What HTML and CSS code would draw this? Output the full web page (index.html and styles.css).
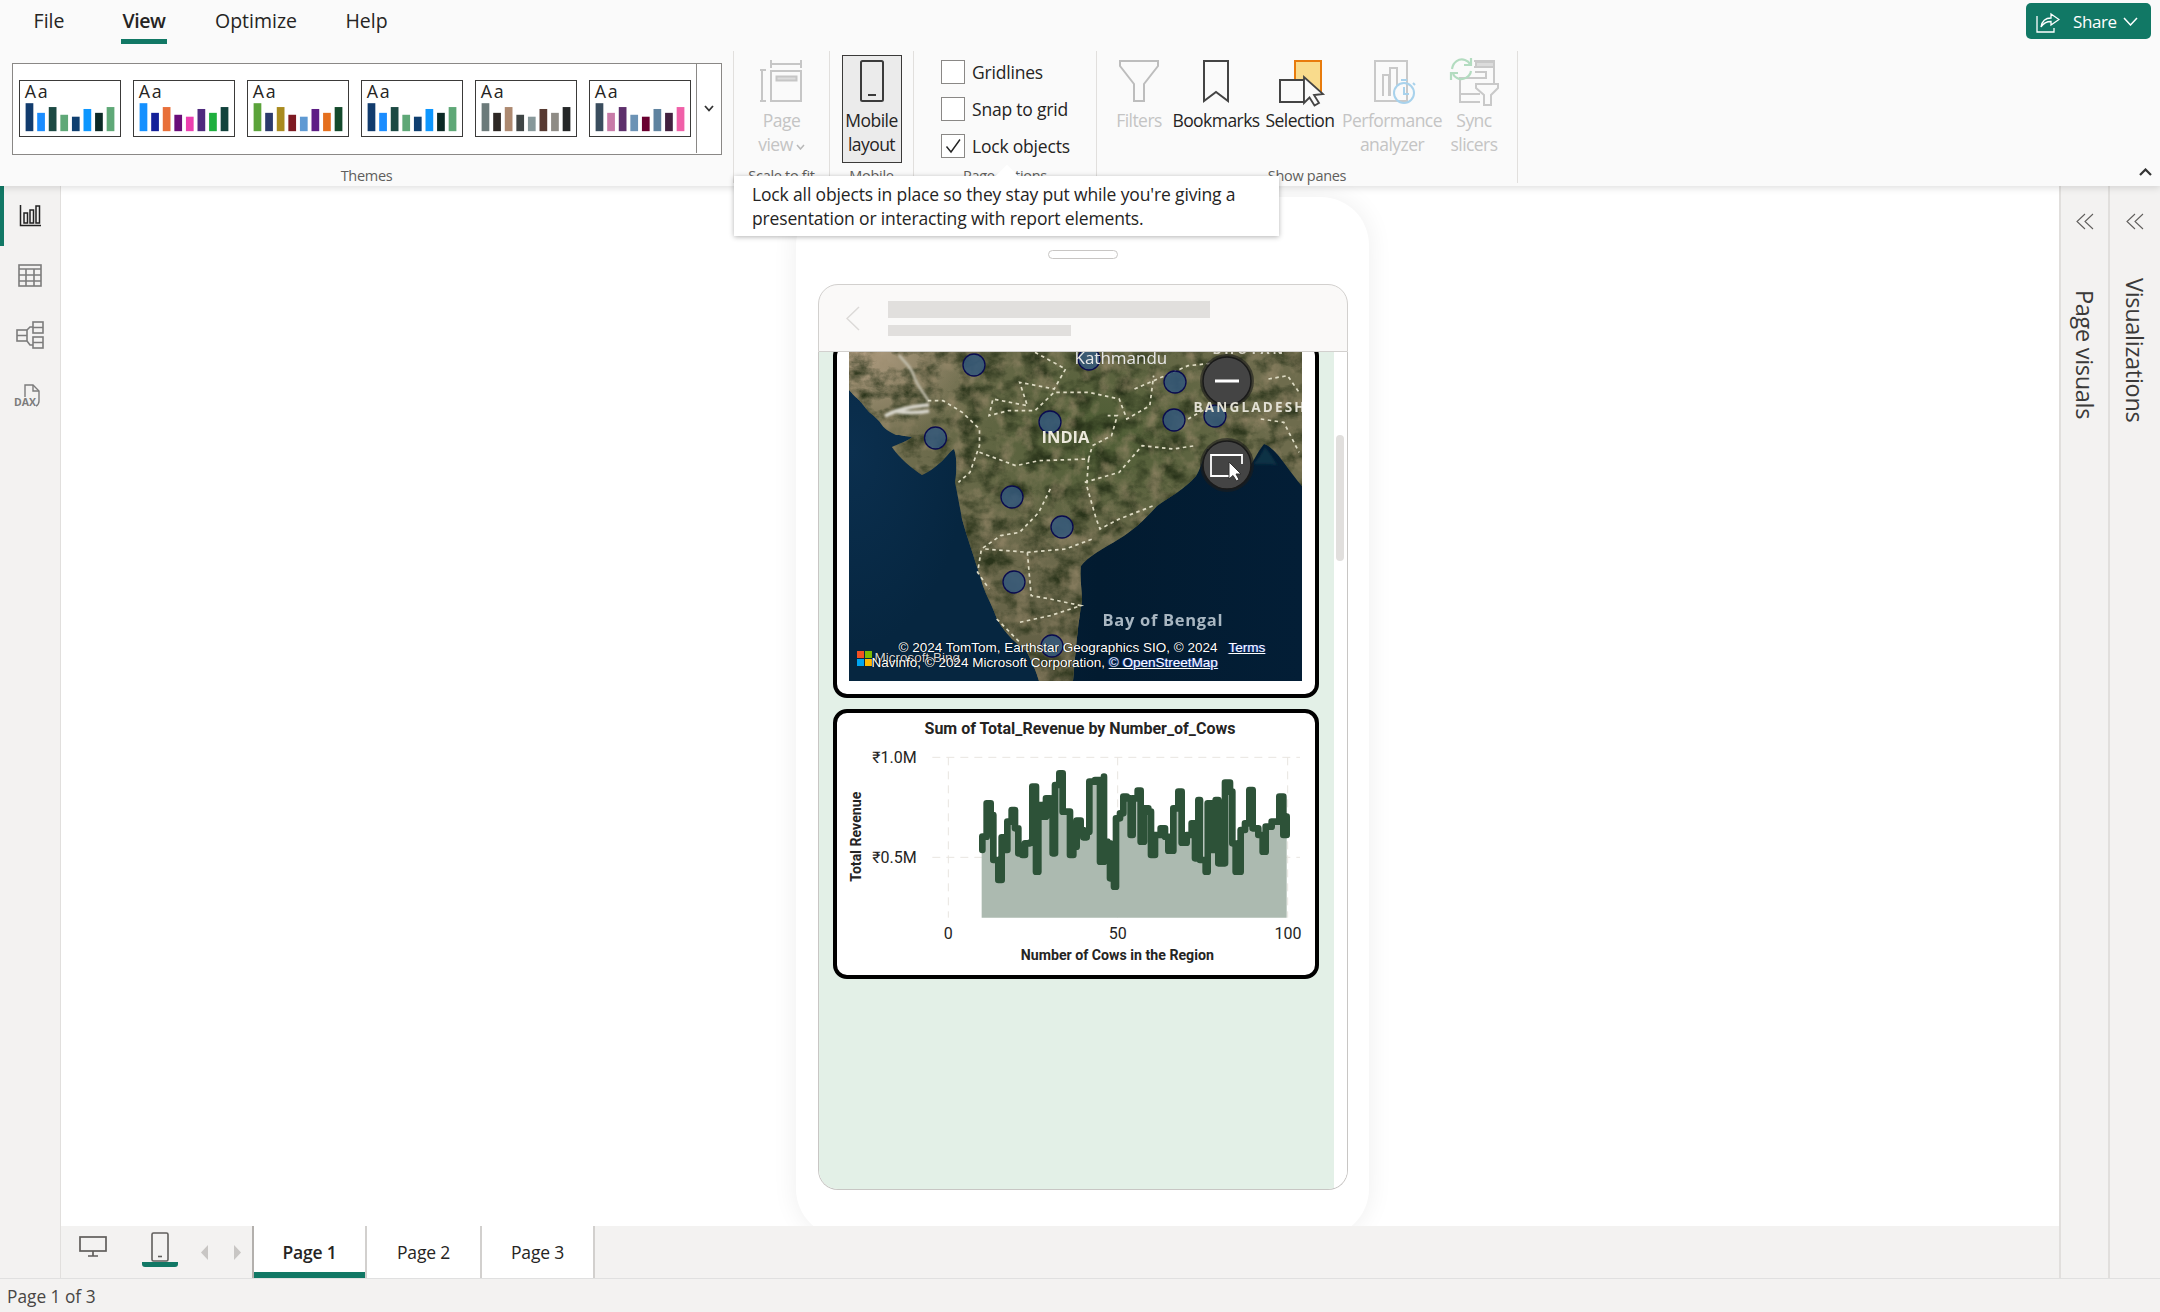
FILE: index.html
```html
<!DOCTYPE html>
<html lang="en">
<head>
<meta charset="utf-8">
<title>Power BI Desktop - Mobile layout</title>
<link rel="stylesheet" href="styles.css">
</head>
<body>
<header class="ribbon">
  <nav class="tabs">
    <span class="tab t-file">File</span>
    <span class="tab t-view active">View</span>
    <span class="tab t-opt">Optimize</span>
    <span class="tab t-help">Help</span>
    <button class="share">
      <svg width="24" height="24" viewBox="0 0 24 24" fill="none" stroke="#fff" stroke-width="1.3"><path d="M1 7V23H18V19"/><path d="M5 18C6 12 10 9 15 9V5L23 10.5L15 16V12.500C11 12.500 7.500 14 5 18Z"/></svg>
      <span>Share</span>
      <svg width="15" height="9" viewBox="0 0 15 9" fill="none" stroke="#fff" stroke-width="1.500"><path d="M1 1L7.500 8L14 1"/></svg>
    </button>
  </nav>
  <div class="groups">
    <section class="group g-themes">
      <div class="gallery">
        <svg width="0" height="0" class="defs"><defs>
          <rect id="b1" x="5" y="23" width="8" height="29"/><rect id="b2" x="17" y="33" width="8" height="19"/><rect id="b3" x="29" y="27" width="8" height="25"/><rect id="b4" x="41" y="35" width="8" height="17"/><rect id="b5" x="53" y="37" width="8" height="15"/><rect id="b6" x="65" y="29" width="8" height="23"/><rect id="b7" x="77" y="33" width="8" height="19"/><rect id="b8" x="89" y="27" width="8" height="25"/>
        </defs></svg>
        <svg class="thumb" viewBox="0 0 102 57"><text x="4" y="18" class="aa">Aa</text><use href="#b1" fill="#123c6e"/><use href="#b2" fill="#1a8cff"/><use href="#b3" fill="#1c4a44"/><use href="#b4" fill="#5fa877"/><use href="#b5" fill="#0f3f70"/><use href="#b6" fill="#0d97ff"/><use href="#b7" fill="#0c2a26"/><use href="#b8" fill="#5fa877"/></svg>
        <svg class="thumb" viewBox="0 0 102 57"><text x="4" y="18" class="aa">Aa</text><use href="#b1" fill="#1490ff"/><use href="#b2" fill="#14219a"/><use href="#b3" fill="#e8703a"/><use href="#b4" fill="#6a0d7a"/><use href="#b5" fill="#ec3fb0"/><use href="#b6" fill="#4f2a7e"/><use href="#b7" fill="#1faf3e"/><use href="#b8" fill="#11433c"/></svg>
        <svg class="thumb" viewBox="0 0 102 57"><text x="4" y="18" class="aa">Aa</text><use href="#b1" fill="#5ba33a"/><use href="#b2" fill="#2b3a6c"/><use href="#b3" fill="#a98b1f"/><use href="#b4" fill="#7e1a22"/><use href="#b5" fill="#5f9ad3"/><use href="#b6" fill="#5d1e85"/><use href="#b7" fill="#e5701e"/><use href="#b8" fill="#144a2c"/></svg>
        <svg class="thumb" viewBox="0 0 102 57"><text x="4" y="18" class="aa">Aa</text><use href="#b1" fill="#123c6e"/><use href="#b2" fill="#1a8cff"/><use href="#b3" fill="#1c4a44"/><use href="#b4" fill="#5fa877"/><use href="#b5" fill="#0f3f70"/><use href="#b6" fill="#0d97ff"/><use href="#b7" fill="#0c2a26"/><use href="#b8" fill="#5fa877"/></svg>
        <svg class="thumb" viewBox="0 0 102 57"><text x="4" y="18" class="aa">Aa</text><use href="#b1" fill="#6c7a7a"/><use href="#b2" fill="#2e2825"/><use href="#b3" fill="#ad8970"/><use href="#b4" fill="#3f4545"/><use href="#b5" fill="#87989a"/><use href="#b6" fill="#573a32"/><use href="#b7" fill="#8f8c86"/><use href="#b8" fill="#252728"/></svg>
        <svg class="thumb" viewBox="0 0 102 57"><text x="4" y="18" class="aa">Aa</text><use href="#b1" fill="#3a4d5e"/><use href="#b2" fill="#c87ba8"/><use href="#b3" fill="#5e2f6c"/><use href="#b4" fill="#6c93b5"/><use href="#b5" fill="#6a0030"/><use href="#b6" fill="#5f83a0"/><use href="#b7" fill="#43213f"/><use href="#b8" fill="#f060a8"/></svg>
        <span class="more"><svg width="10" height="7" viewBox="0 0 10 7" fill="none" stroke="#333" stroke-width="1.800"><path d="M1 1L5 5.500L9 1"/></svg></span>
      </div>
      <div class="glabel">Themes</div>
    </section>
    <section class="group g-scale">
      <div class="big off w-page">
        <svg width="42" height="42" viewBox="0 0 42 42" fill="none" stroke="#c6c6c6" stroke-width="2"><path d="M11 4H41M11 0V8M41 0V8"/><path d="M2 10V41M0 10H6M0 41H6"/><rect x="11" y="11" width="30" height="30"/><rect x="16.500" y="16.500" width="20" height="4" fill="#dcdcdc"/></svg>
        <span>Page<br>view<svg class="mini" width="9" height="6" viewBox="0 0 9 6" fill="none" stroke="#b8b8b8" stroke-width="1.500"><path d="M1 1L4.500 5L8 1"/></svg></span>
      </div>
      <div class="glabel">Scale to fit</div>
    </section>
    <section class="group g-mobile">
      <div class="big selected">
        <svg width="24" height="42" viewBox="0 0 24 42" fill="none" stroke="#3b3b3b" stroke-width="2"><rect x="1" y="1" width="22" height="40" rx="1.500"/><path d="M8 35H16"/></svg>
        <span>Mobile<br>layout</span>
      </div>
      <div class="glabel">Mobile</div>
    </section>
    <section class="group g-page">
      <div class="checks">
        <label class="check"><span class="box"></span>Gridlines</label>
        <label class="check"><span class="box"></span>Snap to grid</label>
        <label class="check"><span class="box"><svg width="18" height="18" viewBox="0 0 18 18" fill="none" stroke="#222" stroke-width="1.400"><path d="M2.500 9.500L7 15L16 2.500"/></svg></span>Lock objects</label>
      </div>
      <div class="glabel">Page options</div>
    </section>
    <section class="group g-panes">
      <div class="panes-row">
        <div class="big off w-filters">
          <svg width="40" height="42" viewBox="0 0 40 42" fill="none" stroke="#bdbdbd" stroke-width="2"><path d="M1 1H39V6L25 24V41H15V24L1 6Z"/></svg>
          <span>Filters</span>
        </div>
        <div class="big w-book">
          <svg width="26" height="42" viewBox="0 0 26 42" fill="none" stroke="#444" stroke-width="2"><path d="M1 1H25V41L13 32L1 41Z"/></svg>
          <span>Bookmarks</span>
        </div>
        <div class="big w-sel">
          <svg class="sel-icon" width="46" height="46" viewBox="0 0 46 46" fill="none"><rect x="16" y="1" width="26" height="30" fill="#f9db8c" stroke="#e87b0c" stroke-width="2"/><rect x="1" y="20" width="24" height="22" fill="#fafafa" stroke="#444" stroke-width="2"/><path d="M25 17V43L30.500 37.500L35.500 45.500L40 43L35 35L44 34Z" fill="#fafafa" stroke="#444" stroke-width="1.800"/></svg>
          <span>Selection</span>
        </div>
        <div class="big off w-perf">
          <svg class="perf-icon" width="44" height="44" viewBox="0 0 44 44" fill="none" stroke="#c9c9c9" stroke-width="2"><rect x="1" y="1" width="32" height="40"/><path d="M9 36V15H15V36M16 36V8H23V26"/><circle cx="30" cy="33" r="10" stroke="#a8d2ec"/><path d="M30 27V34H35M27 20H33M39 23L41 25" stroke="#a8d2ec"/></svg>
          <span>Performance<br>analyzer</span>
        </div>
        <div class="big off w-sync">
          <svg class="sync-icon" width="48" height="48" viewBox="0 0 48 48" fill="none" stroke="#c9c9c9" stroke-width="2"><path d="M24 4H44V26M24 10H44" /><rect x="26" y="5" width="18" height="5" fill="#dcdcdc"/><path d="M25 15H36V21H10V37H30M10 37V45H30"/><path d="M26 27H48V31L41 38V48H34V38L26 31Z" fill="#fafafa"/><path d="M2 12C3 5 9 1 15 3C18 4 19 5 20 7M21 14C20 20 13 24 7 21C5 20 4 19 3 17" stroke="#b3dcc0" stroke-width="2.200"/><path d="M21 1V8H14M1 23V16H8" stroke="#b3dcc0" stroke-width="2.200"/></svg>
          <span>Sync<br>slicers</span>
        </div>
      </div>
      <div class="glabel">Show panes</div>
    </section>
  </div>
  <svg class="collapse" width="13" height="8" viewBox="0 0 13 8" fill="none" stroke="#333" stroke-width="2.200"><path d="M1 7L6.500 1.500L12 7"/></svg>
</header>

<div class="tooltip">Lock all objects in place so they stay put while you're giving a presentation or interacting with report elements.</div>

<main class="main">
  <aside class="rail">
    <div class="rail-item current">
      <svg width="22" height="22" viewBox="0 0 22 22" fill="none" stroke="#222" stroke-width="1.500"><path d="M1.500 0V20.500H22"/><rect x="5" y="8" width="3.500" height="10"/><rect x="11" y="5" width="3.500" height="13"/><rect x="17" y="1" width="3.500" height="17"/></svg>
    </div>
    <div class="rail-item">
      <svg width="24" height="23" viewBox="0 0 24 23" fill="none" stroke="#7c7c7c" stroke-width="1.600"><rect x="1" y="1" width="22" height="21"/><path d="M1 5H23M1 11H23M1 17H23M8 5V22M16 5V22"/></svg>
    </div>
    <div class="rail-item">
      <svg width="28" height="28" viewBox="0 0 28 28" fill="none" stroke="#7c7c7c" stroke-width="1.600"><rect x="1" y="9" width="10" height="11"/><rect x="17" y="1" width="10" height="11"/><rect x="17" y="16" width="10" height="11"/><path d="M1 14.500H11M17 6.500H27M17 21.500H27M11 9L14 6H17M11 20L14 24H17"/></svg>
    </div>
    <div class="rail-item dax">
      <svg width="24" height="24" viewBox="0 0 24 24" fill="none" stroke="#7c7c7c" stroke-width="1.400"><path d="M7 14V2H15L21 8V18C21 21 20 22 18 23"/><path d="M15 2V8H21"/></svg>
      <span>DAX</span>
    </div>
  </aside>

  <div class="stage">
    <div class="canvas">
      <div class="phone">
        <div class="notch"></div>
        <div class="screen-head">
          <svg width="14" height="25" viewBox="0 0 14 25" fill="none" stroke="#dcdad8" stroke-width="1.500"><path d="M13 1L1 12.500L13 24"/></svg>
          <div class="head-lines"><div class="line-a"></div><div class="line-b"></div></div>
        </div>
        <div class="screen-body">
          <div class="report">
            <article class="card map-card">
              <div class="map">
                <svg class="map-art" width="453" height="329" viewBox="0 0 453 329">
                  <defs>
                    <clipPath id="land"><path d="M0 0H453V134C440 120 428 96 415 92C408 100 404 112 400 114C385 108 372 100 358 97C352 112 350 120 347 124C335 138 320 145 308 154C295 168 285 178 270 187C255 196 238 205 232 214C230 230 235 245 232 254C228 280 226 305 224 329H190C185 312 180 305 178 300C165 290 155 280 148 267C142 250 135 240 132 227C125 205 118 185 113 167C110 150 108 140 106 130C108 118 108 105 105 97C100 100 95 108 92 110C85 116 80 120 73 123C65 118 58 112 53 107C48 102 45 98 43 95C48 92 58 90 63 85C55 84 50 83 47 83C40 80 35 76 33 73C30 68 25 64 20 60C15 54 12 50 10 48C5 44 2 40 0 38Z"/></clipPath>
                    <radialGradient id="sea1" cx=".02" cy=".3" r=".6"><stop offset="0" stop-color="#0b2f4e"/><stop offset="1" stop-color="#062640"/></radialGradient>
                    <radialGradient id="tan" cx=".02" cy="0" r=".28"><stop offset="0" stop-color="#b39f84"/><stop offset="1" stop-color="#b39f84" stop-opacity="0"/></radialGradient>
                    <radialGradient id="green" cx=".55" cy=".25" r=".4"><stop offset="0" stop-color="#4c5c33"/><stop offset="1" stop-color="#4c5c33" stop-opacity="0"/></radialGradient>
                    <linearGradient id="south" x1="0" x2="0" y1="0" y2="1"><stop offset=".4" stop-color="#6e6a4e" stop-opacity="0"/><stop offset="1" stop-color="#5e5b42"/></linearGradient>
                    <linearGradient id="seaDeep" x1="0" x2="1"><stop offset="0" stop-color="#062640"/><stop offset=".55" stop-color="#021b30"/><stop offset="1" stop-color="#031e36"/></linearGradient>
                    <filter id="dark" x="0" y="0" width="100%" height="100%" color-interpolation-filters="sRGB"><feTurbulence type="fractalNoise" baseFrequency=".045 .06" numOctaves="5" seed="23"/><feColorMatrix values="0 0 0 0 .16 0 0 0 0 .2 0 0 0 0 .1 2.400 0 0 0 -.98"/></filter>
                    <filter id="light" x="0" y="0" width="100%" height="100%" color-interpolation-filters="sRGB"><feTurbulence type="fractalNoise" baseFrequency=".06 .05" numOctaves="5" seed="4"/><feColorMatrix values="0 0 0 0 .6 0 0 0 0 .54 0 0 0 0 .42 0 1.700 0 0 -.78"/></filter>
                    <filter id="soft"><feGaussianBlur stdDeviation=".45"/></filter>
                    <filter id="softer"><feGaussianBlur stdDeviation="1"/></filter>
                  </defs>
                  <rect width="453" height="329" fill="url(#seaDeep)"/>
                  <rect width="190" height="329" fill="url(#sea1)"/>
                  <g clip-path="url(#land)">
                    <rect width="453" height="329" fill="#6e6c4d"/>
                    <rect width="453" height="329" fill="url(#green)"/>
                    <rect width="453" height="329" fill="url(#south)"/>
                    <rect width="453" height="329" fill="url(#tan)"/>
                    <rect width="453" height="329" filter="url(#dark)"/>
                    <rect width="453" height="329" filter="url(#light)"/>
                  </g>
                  <path d="M404 112C409 108 412 102 416 95C420 100 424 106 428 113C420 112 412 112 404 112Z" fill="#0b3044" filter="url(#softer)"/>
                  <g fill="none" filter="url(#softer)">
                    <path d="M50 3C55 10 62 14 65 24C68 34 76 42 80 50" stroke="#c4c1b0" stroke-width="2.400"/>
                    <path d="M80 53C65 54 50 56 36 64M46 59C55 61 70 61 80 59" stroke="#d8d6cc" stroke-width="3.500"/>
                  </g>
                  <g fill="none" filter="url(#soft)">
                    <g stroke="#dedbc4" stroke-width="1.700" stroke-dasharray="3.500 3.500" transform="scale(.3827 .3333) translate(-154 -399)">
                      <path vector-effect="non-scaling-stroke" d="M360 545L400 545L450 580L495 630L495 680L470 760L440 790"/>
                      <path vector-effect="non-scaling-stroke" d="M495 700L590 740L650 725L780 720L790 680L840 650L855 590L830 590"/>
                      <path vector-effect="non-scaling-stroke" d="M640 400L720 450L690 510L600 490L620 560L530 540L520 590L570 575L640 575L690 520L780 520L860 540L880 600L940 560L950 470"/>
                      <path vector-effect="non-scaling-stroke" d="M780 720L775 800L800 900L810 930L860 900L950 860"/>
                      <path vector-effect="non-scaling-stroke" d="M770 790L860 760L920 680L1000 690L1060 680"/>
                      <path vector-effect="non-scaling-stroke" d="M680 810L650 880L600 940L550 950L500 990L490 1060L520 1110"/>
                      <path vector-effect="non-scaling-stroke" d="M510 990L620 1000L720 990L790 960"/>
                      <path vector-effect="non-scaling-stroke" d="M620 1000L630 1130L680 1140L760 1160L680 1190L600 1210"/>
                      <path vector-effect="non-scaling-stroke" d="M540 1200L600 1270M900 510L960 480L1040 440L1130 430M1040 600L1100 560M1230 600L1290 610L1330 700M1250 480L1300 470L1330 520"/>
                    </g>
                  </g>
                  <g class="bubbles">
                    <circle cx="125" cy="13" r="11"/><circle cx="240" cy="7" r="11"/><circle cx="326" cy="30" r="11"/><circle cx="201" cy="70" r="11"/><circle cx="325" cy="68" r="11"/><circle cx="366" cy="64" r="11"/><circle cx="86.500" cy="86" r="11"/><circle cx="163" cy="145" r="11"/><circle cx="213" cy="175" r="11"/><circle cx="165" cy="230" r="11"/><circle cx="203" cy="294" r="11"/>
                  </g>
                  <g class="map-btn">
                    <circle class="halo" cx="378" cy="29" r="27"/>
                    <circle class="disc" cx="378" cy="29" r="24"/>
                    <path d="M366 29H390" stroke="#fff" stroke-width="2.800"/>
                    <circle class="halo" cx="378" cy="113" r="27"/>
                    <circle class="disc" cx="378" cy="113" r="24"/>
                    <path d="M393 112V103H362V124H380" fill="none" stroke="#fff" stroke-width="1.800"/>
                    <path d="M380 110V127L384 123.500L387.500 129L390 127.500L387 122L392 122Z" fill="#fff" stroke="#333"/>
                  </g>
                  <g transform="translate(8 299)"><rect width="7" height="7" fill="#f25022"/><rect x="8" width="7" height="7" fill="#7fba00"/><rect y="8" width="7" height="7" fill="#00a4ef"/><rect x="8" y="8" width="7" height="7" fill="#ffb900"/></g>
                </svg>
                <span class="lbl l-bhutan">BHUTAN</span>
                <span class="lbl l-kath">Kathmandu</span>
                <span class="lbl l-bang">BANGLADESH</span>
                <span class="lbl l-india">INDIA</span>
                <span class="lbl l-bay">Bay of Bengal</span>
                <span class="attr a-ms">Microsoft Bing</span>
                <span class="attr a-1">© 2024 TomTom, Earthstar Geographics SIO, © 2024</span>
                <span class="attr a-terms">Terms</span>
                <span class="attr a-2">Navinfo, © 2024 Microsoft Corporation, <u>© OpenStreetMap</u></span>
              </div>
            </article>
            <article class="card chart-card">
              <svg class="chart" width="478" height="262" viewBox="51 39 1434 786">
                <text x="780" y="103" class="c-title">Sum of Total_Revenue by Number_of_Cows</text>
                <g class="grid">
                  <path d="M337 172H1440M337 472H1440M385 172V653M893 172V653M1403 172V653"/>
                </g>
                <path class="area" d="M487 450V410H500V310H512V345H520V480H535V540H545V412H555V450H562V365H575V330H585V385H595V460H607V465H615V430H630V428H637V260H648V515H655V315H668V350H678V295H690V345H698V460H705V255H718V220H728V335H742V335H750V465H760V440H770V362H782V390H790V412H800V395H808V245H825V240H840V485H852V230V425H862V430H870V535H882V560H888V355H900V340H910V290H920V295H932V405H938V295H953V272H962V425H972V325H985V335H993V465H1005V405H1022V385H1035V410H1045V452H1060V325H1075V275H1085V428H1100V405H1115V370H1125V475H1135V300H1140V480H1157V515H1163V310H1175V450H1187V300H1195V490H1215V248H1230V275H1237V430H1247V515H1262V390H1275V370H1288V270H1298V385H1315V405H1328V455H1337V380H1355V365H1378V290H1390V405H1400V653H485V450Z"/>
                <path class="trend" d="M487 450V410H500V310H512V345H520V480H535V540H545V412H555V450H562V365H575V330H585V385H595V460H607V465H615V430H630V428H637V260H648V515H655V315H668V350H678V295H690V345H698V460H705V255H718V220H728V335H742V335H750V465H760V440H770V362H782V390H790V412H800V395H808V245H825V240H840V485H852V230V425H862V430H870V535H882V560H888V355H900V340H910V290H920V295H932V405H938V295H953V272H962V425H972V325H985V335H993V465H1005V405H1022V385H1035V410H1045V452H1060V325H1075V275H1085V428H1100V405H1115V370H1125V475H1135V300H1140V480H1157V515H1163V310H1175V450H1187V300H1195V490H1215V248H1230V275H1237V430H1247V515H1262V390H1275V370H1288V270H1298V385H1315V405H1328V455H1337V380H1355V365H1378V290H1390V405H1400V350"/>
                <text x="290" y="189" class="c-tick end">₹1.0M</text>
                <text x="290" y="489" class="c-tick end">₹0.5M</text>
                <text x="385" y="717" class="c-tick mid">0</text>
                <text x="893" y="717" class="c-tick mid">50</text>
                <text x="1404" y="717" class="c-tick mid">100</text>
                <text x="892" y="781" class="c-axis">Number of Cows in the Region</text>
                <text transform="translate(122 410) rotate(-90)" class="c-axis">Total Revenue</text>
              </svg>
            </article>
          </div>
          <div class="scrollbar"><div class="thumb-bar"></div></div>
        </div>
      </div>
    </div>
    <div class="pagebar">
      <div class="views">
        <svg width="28" height="21" viewBox="0 0 28 21" fill="none" stroke="#605e5c" stroke-width="1.700"><rect x="1" y="1" width="26" height="14"/><path d="M14 15V20M9 20H19"/></svg>
        <span class="phone-view">
          <svg width="18" height="30" viewBox="0 0 18 30" fill="none" stroke="#605e5c" stroke-width="1.600"><rect x="1" y="1" width="16" height="28" rx="1.500"/><path d="M7 24.500H11"/></svg>
        </span>
      </div>
      <div class="arrows">
        <svg width="7" height="15" viewBox="0 0 7 15"><path d="M7 0V15L0 7.500Z" fill="#c8c6c4"/></svg>
        <svg width="7" height="15" viewBox="0 0 7 15"><path d="M0 0V15L7 7.500Z" fill="#c8c6c4"/></svg>
      </div>
      <span class="ptab on">Page 1</span>
      <span class="ptab">Page 2</span>
      <span class="ptab end-tab">Page 3</span>
    </div>
  </div>

  <aside class="pane pane-a">
    <svg width="18" height="17" viewBox="0 0 18 17" fill="none" stroke="#605e5c" stroke-width="1.100"><path d="M9 1L1 8.500L9 16M17 1L9 8.500L17 16"/></svg>
    <span class="vtext v-page">Page visuals</span>
  </aside>
  <aside class="pane pane-b">
    <svg width="18" height="17" viewBox="0 0 18 17" fill="none" stroke="#605e5c" stroke-width="1.100"><path d="M9 1L1 8.500L9 16M17 1L9 8.500L17 16"/></svg>
    <span class="vtext v-vis">Visualizations</span>
  </aside>
</main>
<footer class="status">Page 1 of 3</footer>
</body>
</html>
```

FILE: styles.css
```css
* { box-sizing: border-box; }
html, body { margin: 0; padding: 0; }
body {
  width: 2160px;
  height: 1312px;
  overflow: hidden;
  display: flex;
  flex-direction: column;
  position: relative;
  background: #fff;
  color: #252423;
  font-family: "Open Sans", "Noto Sans", sans-serif;
  font-size: 17px;
}

/* ribbon */
.ribbon {
  height: 186px;
  flex: none;
  background: #fafafa;
  position: relative;
  z-index: 5;
  box-shadow: 0 2px 7px rgba(0,0,0,.13);
}
.tabs { display: flex; height: 44px; padding-left: 34px; }
.tab {
  height: 44px;
  padding-top: 4px;
  line-height: 34px;
  border-bottom: 5px solid transparent;
  font-size: 19.500px;
  text-align: center;
  white-space: nowrap;
  display: flex;
  justify-content: center;
}
.t-file { width: 30px; margin-right: 57px; }
.t-view { width: 46px; margin-right: 47px; }
.t-opt { width: 84px; margin-right: 47px; }
.t-help { width: 43px; }
.tab.active { border-bottom-color: #117865; font-weight: 600; letter-spacing: -.4px; }
.share {
  margin: 3px 9px 0 auto;
  width: 125px;
  height: 36px;
  background: #117865;
  border: 0;
  border-radius: 5px;
  color: #fff;
  display: flex;
  align-items: center;
  padding: 0 0 0 10px;
  font: 17px "Open Sans", sans-serif;
  letter-spacing: -.4px;
}
.share span { margin: 0 6px 0 13px; }
.groups { display: flex; margin-top: 7px; height: 132px; }
.group {
  flex: none;
  display: flex;
  flex-direction: column;
  border-right: 1px solid #e1dfdd;
  position: relative;
  align-items: center;
}
.glabel {
  position: absolute;
  left: 0;
  right: 0;
  top: 113px;
  text-align: center;
  font-size: 14.500px;
  line-height: 24px;
  color: #605e5c;
  letter-spacing: -.3px;
}
.g-themes { width: 734px; padding: 12px 0 0 12px; align-items: flex-start; }
.g-scale { width: 96px; }
.g-mobile { width: 84px; }
.g-page { width: 183px; }
.g-panes { width: 421px; }

.gallery {
  width: 710px;
  height: 92px;
  border: 1px solid #8a8886;
  background: #fff;
  display: flex;
  align-items: flex-start;
  padding: 16px 0 0 6px;
  gap: 12px;
  position: relative;
}
.defs { position: absolute; }
.thumb { width: 102px; height: 57px; border: 1px solid #3b3a39; background: #fff; flex: none; display: block; }
.aa { font-family: "Open Sans", sans-serif; font-size: 18.500px; letter-spacing: 2px; fill: #252423; }
.more {
  position: absolute;
  right: 0;
  top: 0;
  bottom: 1px;
  width: 25px;
  border-left: 1px solid #8a8886;
  display: flex;
  align-items: center;
  justify-content: center;
}

.big {
  display: flex;
  flex-direction: column;
  align-items: center;
  padding-top: 9px;
  font-size: 17.500px;
  line-height: 24px;
  text-align: center;
  letter-spacing: -.55px;
  white-space: nowrap;
  flex: none;
}
.big > svg { margin-bottom: 6px; display: block; overflow: visible; flex: none; }
.big > .sel-icon { margin: 0 0 2px 4px; }
.big > .perf-icon { margin: 0 0 4px 8px; }
.big > .sync-icon { margin: -3px 0 3px; }
.off { color: #c4c4c4; }
.mini { margin-left: 3px; vertical-align: 1px; }
.selected {
  width: 60px;
  height: 108px;
  margin-top: 4px;
  padding-top: 4px;
  background: #ebebeb;
  border: 1px solid #3b3a39;
}
.checks { display: flex; flex-direction: column; gap: 13px; padding: 9px 0 0 27px; align-self: flex-start; }
.check { display: flex; align-items: center; gap: 7px; height: 24px; font-size: 17.500px; letter-spacing: -.2px; white-space: nowrap; }
.box { width: 24px; height: 24px; background: #fff; border: 1px solid #8a8886; display: flex; align-items: center; justify-content: center; }
.panes-row { display: flex; padding-left: 11px; align-self: flex-start; }
.w-filters { width: 62px; }
.w-book { width: 92px; }
.w-sel { width: 76px; }
.w-perf { width: 108px; }
.w-sync { width: 56px; }
.collapse { position: absolute; right: 8px; top: 168px; }

/* tooltip */
.tooltip {
  position: absolute;
  z-index: 9;
  left: 734px;
  top: 176px;
  width: 545px;
  height: 60px;
  padding: 6px 18px;
  background: #fff;
  font-size: 17.500px;
  line-height: 24px;
  letter-spacing: -.15px;
  box-shadow: 0 1px 5px rgba(0,0,0,.3);
}
.tooltip::before {
  content: "";
  position: absolute;
  left: 265px;
  top: -8px;
  width: 16px;
  height: 16px;
  background: #fff;
  transform: rotate(45deg);
}

/* main area */
.main { flex: 1; display: flex; min-height: 0; }
.rail {
  width: 61px;
  flex: none;
  background: #f3f2f1;
  border-right: 1px solid #e1dfdd;
}
.rail-item {
  height: 60px;
  display: flex;
  align-items: center;
  justify-content: center;
  position: relative;
}
.rail-item.current { border-left: 4px solid #117865; padding-right: 4px; }
.rail-item:nth-child(2) { margin-top: -1px; }
.dax span {
  position: absolute;
  left: 14px;
  top: 32px;
  font-size: 10.500px;
  font-weight: 700;
  color: #7c7c7c;
  background: #f3f2f1;
  line-height: 11px;
}
.stage { flex: 1; display: flex; flex-direction: column; min-width: 0; }
.canvas { flex: 1; overflow: hidden; min-height: 0; background: #fff; }
.phone {
  width: 573px;
  height: 1040px;
  margin: 11px 0 0 735px;
  background: #fff;
  border-radius: 48px;
  box-shadow: 0 0 26px rgba(0,0,0,.07);
  display: flex;
  flex-direction: column;
  align-items: center;
  padding-top: 53px;
}
.notch { width: 70px; height: 9px; border: 1px solid #c8c6c4; border-radius: 5px; flex: none; }
.screen-head {
  width: 530px;
  height: 68px;
  margin-top: 25px;
  flex: none;
  background: #faf9f8;
  border: 1px solid #d2d0ce;
  border-radius: 20px 20px 0 0;
  display: flex;
  align-items: center;
  padding-left: 27px;
  gap: 28px;
  position: relative;
  z-index: 2;
}
.line-a { width: 322px; height: 17px; background: #e1dfdd; margin-bottom: 7px; }
.line-b { width: 183px; height: 11px; background: #e1dfdd; }
.screen-body {
  width: 530px;
  height: 838px;
  flex: none;
  border: 1px solid #c8c6c4;
  border-top: 0;
  border-radius: 0 0 20px 20px;
  display: flex;
  overflow: hidden;
}
.report {
  width: 515px;
  flex: none;
  background: #e3f0e7;
  padding: 0 14px;
  overflow: hidden;
}
.card { border: 4px solid #000; border-radius: 14px; background: #fff; width: 486px; }
.map-card { height: 356px; margin-top: -10px; padding: 6px 12px; }
.chart-card { height: 270px; margin-top: 11px; }
.chart { display: block; }
.scrollbar { flex: 1; background: #fff; padding: 83px 0 0 2px; }
.thumb-bar { width: 8px; height: 126px; background: #e1dfdd; border-radius: 4px; }

/* map */
.map { width: 453px; height: 329px; position: relative; overflow: hidden; background: #04203a; }
.map-art { display: block; }
.bubbles circle { fill: #34587a; fill-opacity: .86; stroke: #0a0b4f; stroke-width: 1.300; }
.halo { fill: #1c1c1c; fill-opacity: .6; }
.disc { fill: #444; stroke: #1a1a1a; stroke-width: 1.500; }
.lbl {
  position: absolute;
  font-family: "Open Sans", sans-serif;
  white-space: nowrap;
  line-height: 1;
  filter: blur(.3px);
}
.l-bhutan { left: 364px; top: -9px; font-size: 13px; font-weight: 700; letter-spacing: 3px; color: #d6d3c6; }
.l-kath { left: 226px; top: -3px; font-size: 17px; color: #e8e8e8; }
.l-bang { left: 345px; top: 49px; font-size: 13.500px; font-weight: 700; letter-spacing: 2.200px; color: #e2e0d4; }
.l-india { left: 193px; top: 77px; font-size: 16.500px; font-weight: 700; color: #ece9dc; }
.l-bay { left: 254px; top: 260px; font-size: 16.500px; font-weight: 700; letter-spacing: .7px; color: #a9b7c2; }
.attr {
  position: absolute;
  white-space: nowrap;
  font-family: "Liberation Sans", sans-serif;
  font-size: 13.500px;
  line-height: 16px;
  color: #fff;
  text-shadow: 1px 0 0 rgba(0,0,0,.75), -1px 0 0 rgba(0,0,0,.4);
}
.a-ms { left: 26px; top: 298px; color: #d5d5d5; }
.a-1 { left: 50px; top: 288px; }
.a-terms { left: 380px; top: 288px; text-decoration: underline; text-shadow: 1px 0 0 #1b3f9c, -1px 0 0 #1b3f9c; }
.a-2 { left: 23px; top: 303px; }
.a-2 u { text-shadow: 1px 0 0 #1b3f9c, -1px 0 0 #1b3f9c; }

/* chart (units are 1/3 px) */
.c-title { font: 700 48px Roboto, sans-serif; text-anchor: middle; fill: #252423; }
.c-tick { font: 400 48px Roboto, "DejaVu Sans", sans-serif; fill: #252423; }
.end { text-anchor: end; }
.mid { text-anchor: middle; }
.c-axis { font: 700 42.500px Roboto, sans-serif; text-anchor: middle; fill: #252423; }
.grid path { fill: none; stroke: #e8e5e0; stroke-width: 3; stroke-dasharray: 24 18; }
.area { fill: #acbab0; }
.trend { fill: none; stroke: #2d5238; stroke-width: 20; stroke-linejoin: round; stroke-linecap: round; }

/* page tabs */
.pagebar { height: 52px; flex: none; background: #f3f2f1; display: flex; align-items: stretch; }
.views { width: 133px; display: flex; align-items: flex-start; padding-left: 18px; }
.views > svg { margin-top: 10px; }
.phone-view {
  width: 36px;
  height: 41px;
  margin-left: 35px;
  padding: 6px 0 0 9px;
  border-bottom: 5px solid #117865;
  border-radius: 0 0 3px 3px;
}
.phone-view svg { display: block; }
.arrows { width: 58px; display: flex; align-items: center; gap: 26px; padding-left: 7px; }
.ptab {
  width: 115px;
  background: #fff;
  border-left: 2px solid #d2d0ce;
  display: flex;
  align-items: center;
  justify-content: center;
  font-size: 17.500px;
  letter-spacing: -.2px;
}
.ptab.on { width: 113px; font-weight: 600; box-shadow: inset 0 -6px 0 #117865; border-left-color: #b3b0ad; }
.ptab.end-tab { border-right: 2px solid #d2d0ce; }

/* right panes */
.pane {
  flex: none;
  background: #f3f2f1;
  border-left: 2px solid #e1dfdd;
  display: flex;
  flex-direction: column;
  align-items: center;
  padding-top: 27px;
}
.pane-a { width: 49px; }
.pane-b { width: 52px; }
.vtext { writing-mode: vertical-rl; font-size: 23.500px; letter-spacing: -.3px; color: #3b3a39; white-space: nowrap; line-height: 24px; }
.v-page { margin-top: 60px; }
.v-vis { margin-top: 48px; }

.status {
  height: 34px;
  flex: none;
  background: #f3f2f1;
  border-top: 1px solid #e0e0e0;
  padding: 0 0 0 7px;
  line-height: 35px;
  font-size: 17.300px;
  color: #484644;
}
```
